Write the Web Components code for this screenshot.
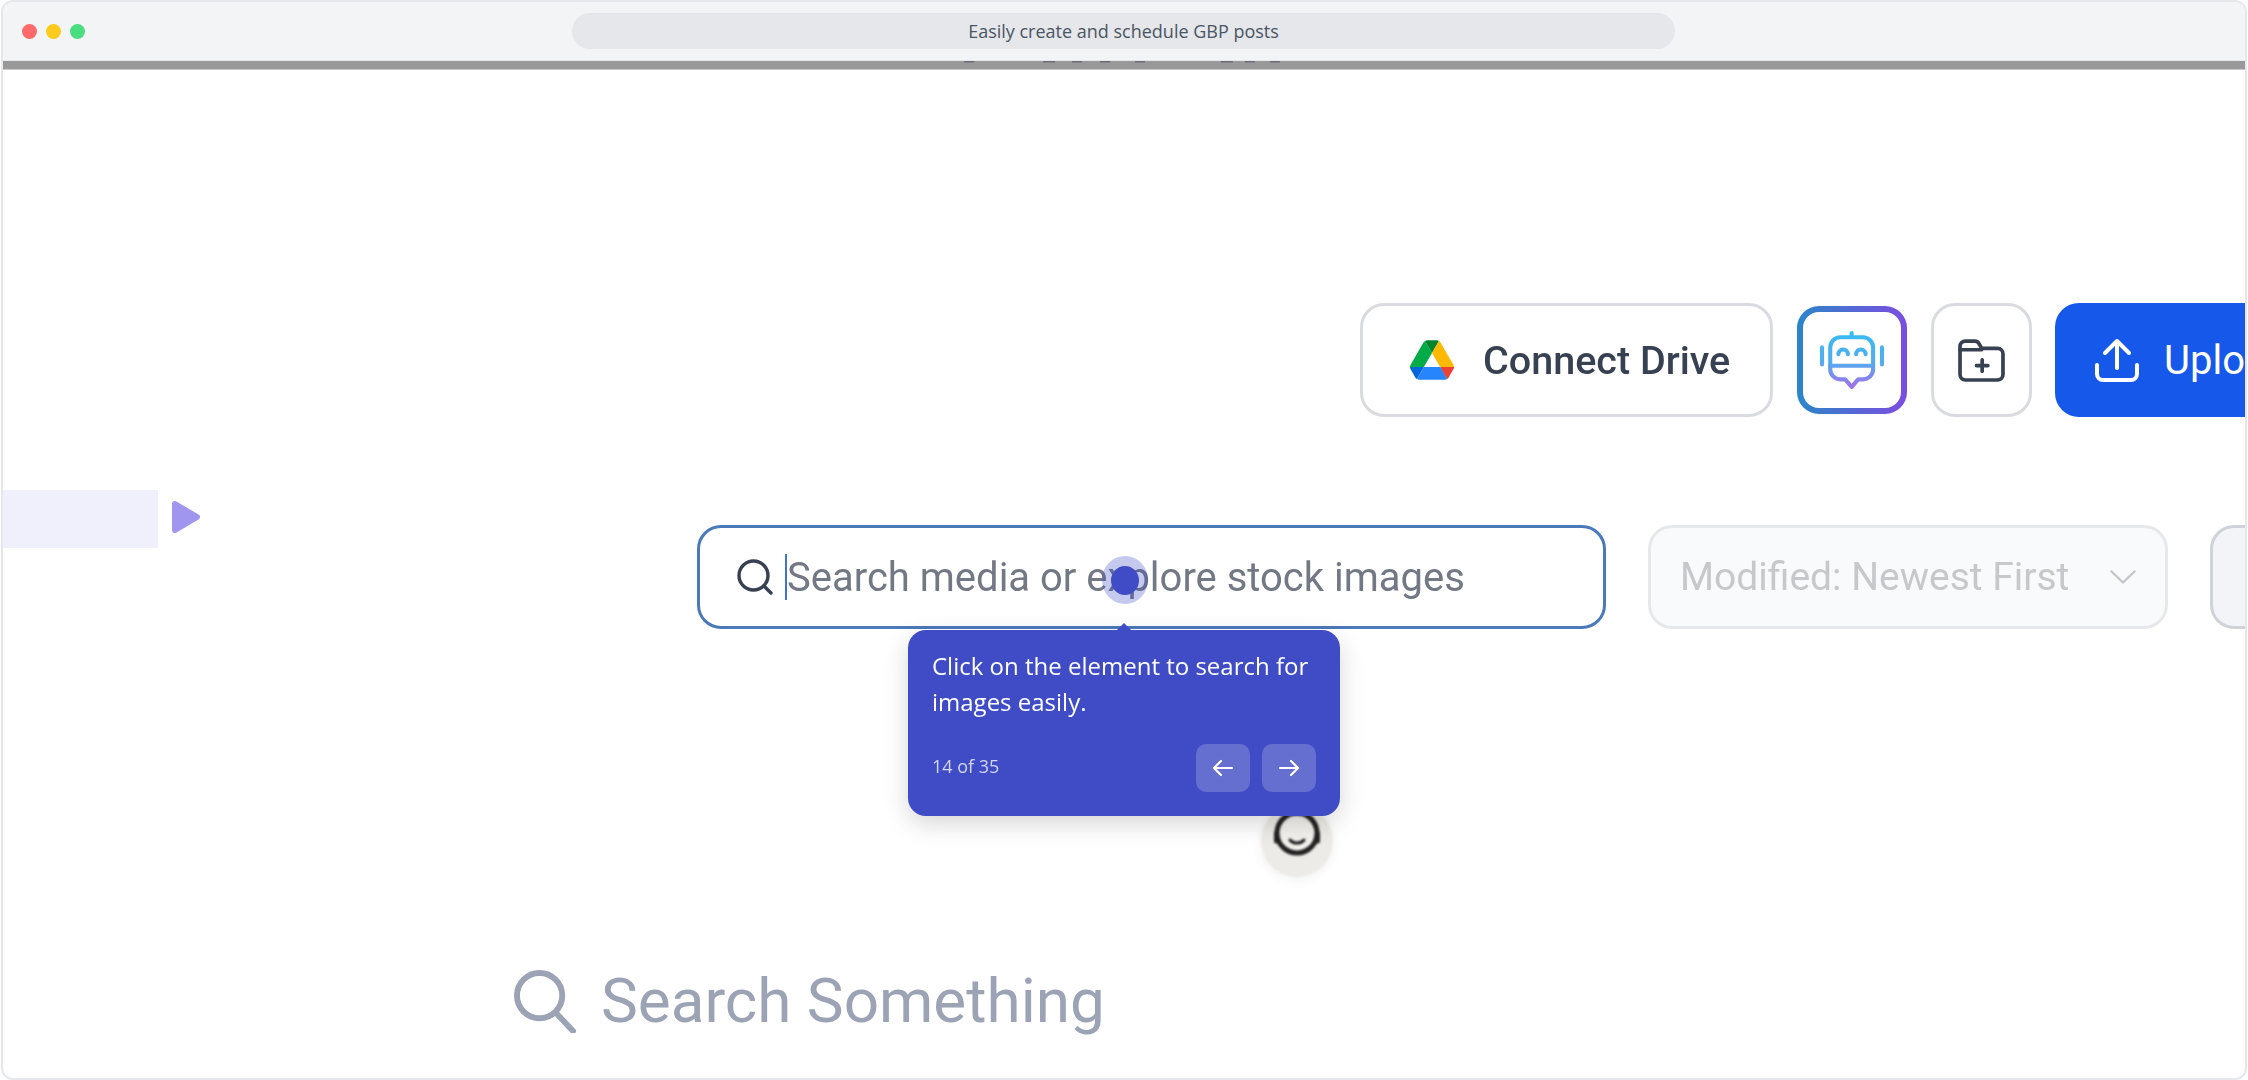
<!DOCTYPE html>
<html lang="en"><head><meta charset="utf-8"><title>Easily create and schedule GBP posts</title>
<style>html,body{margin:0;padding:0;background:#fff;height:1080px;overflow:hidden}</style></head>
<body>
<app-window>
  <title-bar slot="bar">Easily create and schedule GBP posts</title-bar>
  <media-toolbar>
    <drive-button>Connect Drive</drive-button>
    <robot-button></robot-button>
    <folder-button></folder-button>
    <upload-button>Upload</upload-button>
  </media-toolbar>
  <filter-row>
    <play-marker slot="lead"></play-marker>
    <search-field placeholder="Search media or explore stock images"></search-field>
    <sort-select>Modified: Newest First</sort-select>
    <ghost-box></ghost-box>
  </filter-row>
  <search-something>Search Something</search-something>
  <guide-layer slot="overlay">
    <guide-avatar></guide-avatar>
    <guide-hotspot></guide-hotspot>
    <guide-tooltip step="14 of 35">Click on the element to search for images easily.</guide-tooltip>
  </guide-layer>
</app-window>
<script>
function el(name, html){
  customElements.define(name, class extends HTMLElement{
    constructor(){super();this.attachShadow({mode:'open'}).innerHTML=html;}
  });
}
const sans='font-family:Roboto,"Liberation Sans",sans-serif;';
el('app-window',`<style>
:host{display:flex;flex-direction:column;box-sizing:border-box;height:1080px;margin:0 1px;border:2px solid #e5e7eb;border-radius:12px;overflow:hidden;background:#fff}
.strip{display:block;height:8px;background:#999;flex:none;border-bottom:1px solid #c8c8c8}
.stage{flex:1;position:relative;overflow:hidden}
.content{filter:blur(.7px);height:100%}
</style><slot name="bar"></slot>
<svg class="strip" width="100%" viewBox="0 0 2244 8" preserveAspectRatio="none">
<g fill="#6c6c78"><rect x="962" y="0" width="10" height="1.5"/><rect x="1041" y="0" width="12" height="1.5"/><rect x="1070" y="0" width="10" height="1.5"/><rect x="1098" y="0" width="10" height="1.5"/><rect x="1133" y="0" width="10" height="1.5"/><rect x="1219" y="0" width="12" height="1.5"/><rect x="1243" y="0" width="10" height="1.5"/><rect x="1268" y="0" width="10" height="1.5"/></g></svg>
<div class="stage"><div class="content"><slot></slot></div><slot name="overlay"></slot></div>`);
el('title-bar',`<style>
:host{display:flex;align-items:center;height:59px;flex:none;background:#f3f4f6;border-bottom:1px solid #e5e7eb;box-sizing:border-box;padding:0 0 0 19px;position:relative}
.dots{display:flex;gap:9px;width:550px;flex:none}
i{width:15px;height:15px;border-radius:50%;display:block}
.pill{width:1103px;height:36px;border-radius:18px;background:#e5e7eb;display:flex;align-items:center;justify-content:center;font:18px "Open Sans",sans-serif;color:#4b5563}
</style><div class="dots"><i style="background:#ff6b6b"></i><i style="background:#fdcb1b"></i><i style="background:#4ade80"></i></div><div class="pill"><slot></slot></div>`);
el('media-toolbar',`<style>:host{display:flex;align-items:center;padding:233px 0 0 1357px;white-space:nowrap}</style><slot></slot>`);
el('drive-button',`<style>
:host{display:flex;align-items:center;flex:none;box-sizing:border-box;width:413px;height:114px;border:3px solid #d9dbe0;border-radius:24px;background:#fff;padding-left:47px;${sans}font-size:39.5px;font-weight:500;color:#374151}
svg{margin-right:29px;flex:none}
</style><svg width="44" height="40" viewBox="0 0 87.3 78"><path d="m6.6 66.85 3.85 6.65c.8 1.4 1.95 2.5 3.3 3.3l13.75-23.8h-27.5c0 1.55.4 3.1 1.2 4.5z" fill="#0066da"/><path d="m43.65 25-13.75-23.8c-1.35.8-2.5 1.9-3.3 3.3l-25.4 44a9.06 9.06 0 0 0 -1.2 4.5h27.5z" fill="#00ac47"/><path d="m73.55 76.8c1.35-.8 2.5-1.9 3.3-3.3l1.6-2.75 7.65-13.25c.8-1.4 1.2-2.95 1.2-4.5h-27.502l5.852 11.5z" fill="#ea4335"/><path d="m43.65 25 13.75-23.8c-1.35-.8-2.9-1.2-4.5-1.2h-18.5c-1.6 0-3.15.45-4.5 1.2z" fill="#00832d"/><path d="m59.8 53h-32.3l-13.75 23.8c1.35.8 2.9 1.2 4.5 1.2h50.8c1.6 0 3.15-.45 4.5-1.2z" fill="#2684fc"/><path d="m73.4 26.5-12.7-22c-.8-1.4-1.95-2.5-3.3-3.3l-13.75 23.8 16.15 28h27.45c0-1.55-.4-3.1-1.2-4.5z" fill="#ffba00"/></svg><slot></slot>`);
el('robot-button',`<style>
:host{display:flex;align-items:center;justify-content:center;flex:none;box-sizing:border-box;width:110px;height:108px;margin-left:24px;border:6px solid transparent;border-radius:22px;background:linear-gradient(#fff,#fff) padding-box,linear-gradient(90deg,#2a86c8,#7c4de0) border-box}
</style><svg width="64" height="58" viewBox="0 0 188 170" fill="none" stroke="url(#g)" stroke-width="12" stroke-linecap="round" stroke-linejoin="round">
<defs><linearGradient id="g" gradientUnits="userSpaceOnUse" x1="0" y1="0" x2="0" y2="170"><stop offset="0" stop-color="#36bdf2"/><stop offset=".55" stop-color="#55aaf0"/><stop offset="1" stop-color="#a56ee8"/></linearGradient></defs>
<path d="M93 6v10"/><path d="M30 102V48a30 30 0 0 1 30-30h66a30 30 0 0 1 30 30v54"/><path d="M30 102h126"/><path d="M6 48v50M182 48v50"/><path d="M54 68a14 14 0 0 1 28 0M106 68a14 14 0 0 1 28 0"/><path d="M30 102v10a30 30 0 0 0 30 30h14l19 22 19-22h14a30 30 0 0 0 30-30v-10"/></svg>`);
el('folder-button',`<style>
:host{display:flex;align-items:center;justify-content:center;flex:none;box-sizing:border-box;width:101px;height:114px;margin-left:24px;border:3px solid #d9dbe0;border-radius:24px;background:#fff}
</style><svg width="47" height="43" viewBox="0 0 140 128" fill="none" stroke="#374151" stroke-width="11" stroke-linecap="round" stroke-linejoin="round"><path d="M6 30V22A16 16 0 0 1 22 6H50a14 14 0 0 1 12 7l9 15H118a16 16 0 0 1 16 16v62a16 16 0 0 1-16 16H22a16 16 0 0 1-16-16Z"/><path d="M6 32H70"/><path d="M72 62v34M55 79h34"/></svg>`);
el('upload-button',`<style>
:host{display:flex;align-items:center;flex:none;box-sizing:border-box;width:300px;height:114px;margin-left:23px;border-radius:24px;background:#1558ea;padding-left:40px;color:#fff;${sans}font-size:40px;font-weight:400}
svg{margin-right:25px;flex:none}
</style><svg width="44" height="44" viewBox="0 0 44 44" fill="none" stroke="#fff" stroke-width="4" stroke-linecap="round" stroke-linejoin="round"><path d="M22 30V3M10 15 22 3l12 12"/><path d="M2 27v9a6 6 0 0 0 6 6h28a6 6 0 0 0 6-6v-9"/></svg><slot></slot>`);
el('filter-row',`<style>
:host{display:flex;align-items:flex-start;padding-top:73px;position:relative;white-space:nowrap}
.lead{width:694px;flex:none}
</style><div class="lead"><slot name="lead"></slot></div><slot></slot>`);
el('play-marker',`<style>
:host{display:flex;align-items:flex-start}
.bar{width:155px;height:58px;background:#f0f0fc}
svg{margin:10px 0 0 13px}
</style><div class="bar"></div><svg width="30" height="34" viewBox="0 0 30 34"><path d="M4 4 26 17 4 30Z" fill="#a096f0" stroke="#a096f0" stroke-width="6" stroke-linejoin="round"/></svg>`);
class SearchField extends HTMLElement{
  constructor(){super();const r=this.attachShadow({mode:'open'});
  r.innerHTML=`<style>
:host{display:flex;align-items:center;flex:none;box-sizing:border-box;width:909px;height:104px;margin-top:35px;border:3px solid #4b79b9;border-radius:24px;background:#fff;padding-left:37px;${sans}font-size:40px;color:#737885}
svg{flex:none;margin-right:12px}
.caret{width:2px;height:46px;background:#3f74c8;flex:none}
</style><svg width="36" height="36" viewBox="0 0 36 36" fill="none" stroke="#374151" stroke-width="3.4" stroke-linecap="round"><circle cx="16.5" cy="16.5" r="14.5"/><path d="M27 27l7 7"/></svg><div class="caret"></div><span></span>`;
  r.querySelector('span').textContent=this.getAttribute('placeholder');}
}
customElements.define('search-field',SearchField);
el('sort-select',`<style>
:host{display:flex;align-items:center;flex:none;box-sizing:border-box;width:520px;height:104px;margin:35px 0 0 42px;border:3px solid #e7e8eb;border-radius:24px;background:#f9fafb;padding-left:29px;${sans}font-size:39px;color:#c6c8cc}
svg{position:absolute;margin-left:430px}
</style><slot></slot><svg width="26" height="14" viewBox="0 0 26 14" fill="none" stroke="#c4c6cb" stroke-width="2.4" stroke-linecap="round" stroke-linejoin="round"><path d="M1.5 1.5 13 12.5 24.5 1.5"/></svg>`);
el('ghost-box',`<style>
:host{display:block;flex:none;box-sizing:border-box;width:120px;height:104px;margin:35px 0 0 42px;border:3px solid #cfd2d9;border-radius:24px;background:#f3f4f8}
</style>`);
el('search-something',`<style>
:host{display:flex;align-items:center;padding:335px 0 0 511px;${sans}font-size:62px;color:#9ca3b5;white-space:nowrap}
svg{margin:2px 24px 0 0;flex:none}
</style><svg width="63" height="63" viewBox="0 0 64 64" fill="none" stroke="#9ca3b5" stroke-width="6" stroke-linecap="round"><ellipse cx="26" cy="26" rx="23" ry="23"/><path d="M42 43 60 62"/></svg><slot></slot>`);
el('guide-layer',`<style>:host{display:block;position:absolute;inset:0}</style><slot></slot>`);
el('guide-avatar',`<style>
:host{display:block;position:absolute;left:1258px;top:735px;width:72px;height:72px;border-radius:50%;background:#ecebe7;box-shadow:0 3px 12px rgba(0,0,0,.06);filter:blur(1px)}
svg{position:absolute;left:10px;top:7px}
</style><svg width="52" height="44" viewBox="0 0 52 44" fill="none" stroke="#222" stroke-linecap="round"><ellipse cx="26" cy="21" rx="20" ry="20" stroke-width="5" fill="#f2f1ee"/><path d="M5.5 21v8M46.5 21v8" stroke-width="5"/><path d="M19 28a8 6 0 0 0 14 0" stroke-width="3"/></svg>`);
el('guide-hotspot',`<style>
:host{display:block;position:absolute;left:1099px;top:486px;width:46px;height:48px;border-radius:50%;background:rgba(63,76,197,.3)}
i{position:absolute;left:9px;top:10px;width:28px;height:29px;border-radius:50%;background:#3f4cc5}
</style><i></i>`);
class GuideTooltip extends HTMLElement{
  constructor(){super();const r=this.attachShadow({mode:'open'});
  r.innerHTML=`<style>
:host{display:block;position:absolute;left:905px;top:560px;width:432px;box-sizing:border-box;padding:18px 24px 24px;background:#3f4cc5;border-radius:18px;color:#fff;font:24px/36px "Open Sans",sans-serif;box-shadow:0 8px 24px rgba(0,0,0,.16)}
.arrow{position:absolute;left:209px;top:-7px;width:0;height:0;border:7px solid transparent;border-top:0;border-bottom-color:#3f4cc5}
.foot{display:flex;align-items:center;margin-top:24px}
.step{flex:1;font-size:18px;line-height:24px;color:#d3d6f2;margin-top:-4px}
.nav{display:flex;gap:12px}
.nav span{display:flex;align-items:center;justify-content:center;width:54px;height:48px;border-radius:10px;background:rgba(255,255,255,.2)}
</style><div class="arrow"></div><div><slot></slot></div><div class="foot"><div class="step"></div><div class="nav">
<span><svg width="22" height="18" viewBox="0 0 22 18" fill="none" stroke="#fff" stroke-width="2.2" stroke-linecap="round" stroke-linejoin="round"><path d="M20 9H2M9 2 2 9l7 7"/></svg></span>
<span><svg width="22" height="18" viewBox="0 0 22 18" fill="none" stroke="#fff" stroke-width="2.2" stroke-linecap="round" stroke-linejoin="round"><path d="M2 9h18M13 2l7 7-7 7"/></svg></span></div></div>`;
  r.querySelector('.step').textContent=this.getAttribute('step');}
}
customElements.define('guide-tooltip',GuideTooltip);
</script>
</body></html>
